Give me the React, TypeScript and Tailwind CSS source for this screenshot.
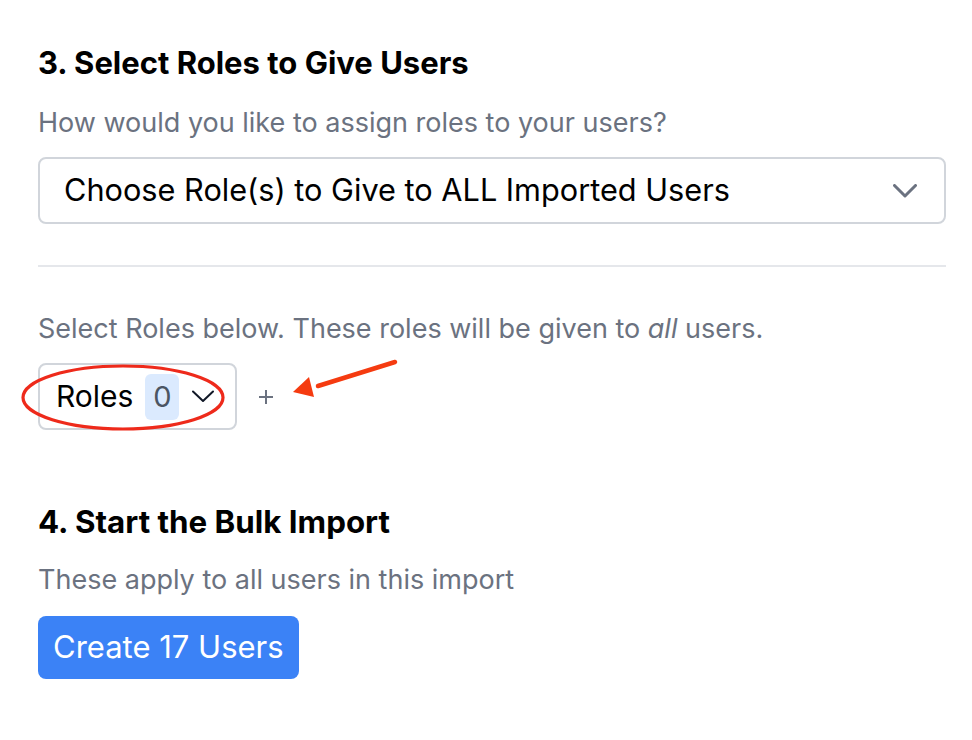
export default function App() {
  return (
    <main
      className="min-h-[740px] bg-white pl-[38px] pr-[26px] pt-[44px] text-black"
      style={{ fontFamily: "Inter, 'Noto Sans', sans-serif" }}
    >
      <section>
        <h2 className="text-[31px] font-bold leading-[38px]">3. Select Roles to Give Users</h2>
        <p className="mt-[24px] text-[27px] leading-[34px] text-[#6b7280]">
          How would you like to assign roles to your users?
        </p>
        <div className="mt-[17px] flex h-[67px] items-center justify-between rounded-[8px] border-2 border-[#d1d5db] pl-[24px] pr-[27px]">
          <span className="text-[30.7px]">Choose Role(s) to Give to ALL Imported Users</span>
          <svg width="24" height="14" viewBox="0 0 24 14" className="text-[#6b7280]">
            <polyline points="1.5,1.5 12,12 22.5,1.5" fill="none" stroke="currentColor" strokeWidth="3" strokeLinecap="round" strokeLinejoin="round" />
          </svg>
        </div>
        <hr className="mt-[41px] border-t-2 border-[#e5e7eb]" />
        <p className="mt-[45px] text-[27px] leading-[34px] text-[#6b7280]">
          Select Roles below. These roles will be given to <em>all</em> users.
        </p>
        <div className="relative mt-[17px] flex items-center">
          <button className="flex h-[67px] items-center rounded-[8px] border-2 border-[#d1d5db] pl-[16px] pr-[21px]">
            <span className="text-[30px]">Roles</span>
            <span className="ml-[12px] flex h-[46px] w-[34px] items-center justify-center rounded-[6px] bg-[#dbeafe] text-[29px] text-[#4b5563]">
              0
            </span>
            <svg width="22" height="13" viewBox="0 0 22 13" className="ml-[13px] text-[#111827]">
              <polyline points="1,1.5 11,11 21,1.5" fill="none" stroke="currentColor" strokeWidth="2" strokeLinecap="round" strokeLinejoin="round" />
            </svg>
          </button>
          <svg width="16" height="16" viewBox="0 0 16 16" className="ml-[21px] text-[#6b7280]">
            <path d="M8 1v14M1 8h14" stroke="currentColor" strokeWidth="2" />
          </svg>
          {/* annotation: red ring round the Roles button and arrow at the plus */}
          <svg
            className="pointer-events-none absolute left-[-20px] top-[-30px]"
            width="430"
            height="110"
            viewBox="0 0 430 110"
          >
            <ellipse cx="105" cy="64.5" rx="100" ry="31.5" fill="none" stroke="#ee2a1b" strokeWidth="3.2" />
            <line x1="377" y1="29" x2="300" y2="53" stroke="#f53b10" strokeWidth="4.5" strokeLinecap="round" />
            <polygon points="275,59 291,44 296,64" fill="#f53b10" />
          </svg>
        </div>
      </section>
      <section className="mt-[73px]">
        <h2 className="text-[31.3px] font-bold leading-[38px]">4. Start the Bulk Import</h2>
        <p className="mt-[22px] text-[27px] leading-[34px] text-[#6b7280]">
          These apply to all users in this import
        </p>
        <button className="mt-[19px] h-[63px] rounded-[8px] bg-[#3b82f6] px-[15px] text-[31px] text-white">
          Create 17 Users
        </button>
      </section>
    </main>
  );
}
